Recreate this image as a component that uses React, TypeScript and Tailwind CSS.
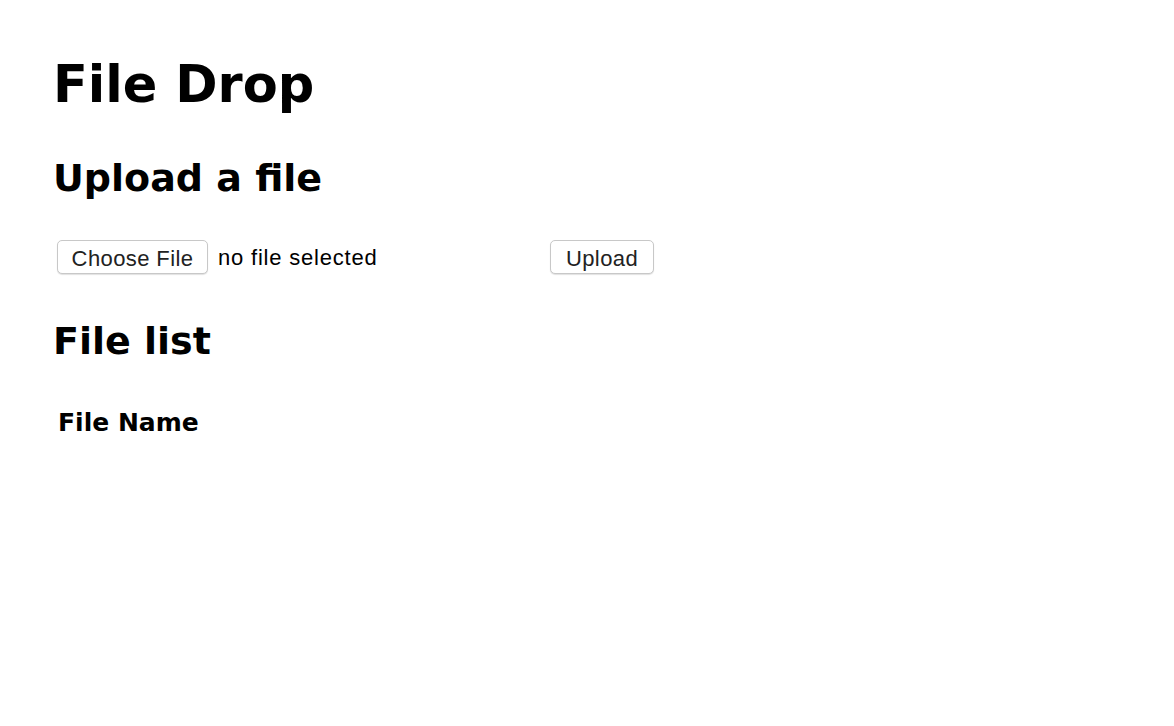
export default function App() {
    return (
        <div className="min-h-screen bg-white px-[53px] pt-[55px] text-black font-['DejaVu_Sans',sans-serif]">
            <h1 className="text-[51px] leading-[60px] font-bold">File Drop</h1>

            {/* Upload */}
            <h2 className="mt-[41px] text-[38px] leading-[44px] font-bold">Upload a file</h2>
            <div className="mt-[40px] flex items-start h-[34px] font-['Liberation_Sans',Arial,sans-serif] text-[22px] tracking-[0.4px]">
                <div className="w-[493px] flex items-start">
                    <button className="ml-[4px] h-[34px] w-[151px] rounded-[5px] border border-[#c8c8c8] bg-white pt-[3px] leading-[30px] text-[#222] shadow-[0_1px_1px_rgba(0,0,0,0.12)]">
                        Choose File
                    </button>
                    <span className="ml-[10px] pt-[3px] leading-[30px] tracking-[0.8px]">no file selected</span>
                </div>
                <button className="ml-[4px] h-[34px] w-[104px] rounded-[5px] border border-[#c8c8c8] bg-white pt-[3px] leading-[30px] text-[#222] shadow-[0_1px_1px_rgba(0,0,0,0.12)]">
                    Upload
                </button>
            </div>

            {/* List */}
            <h2 className="mt-[45px] text-[38px] leading-[44px] font-bold">File list</h2>
            <table className="mt-[45px]">
                <thead>
                    <tr>
                        <th className="pl-[5px] text-left text-[25px] leading-[30px] font-bold">File Name</th>
                    </tr>
                </thead>
                <tbody></tbody>
            </table>
        </div>
    );
}
